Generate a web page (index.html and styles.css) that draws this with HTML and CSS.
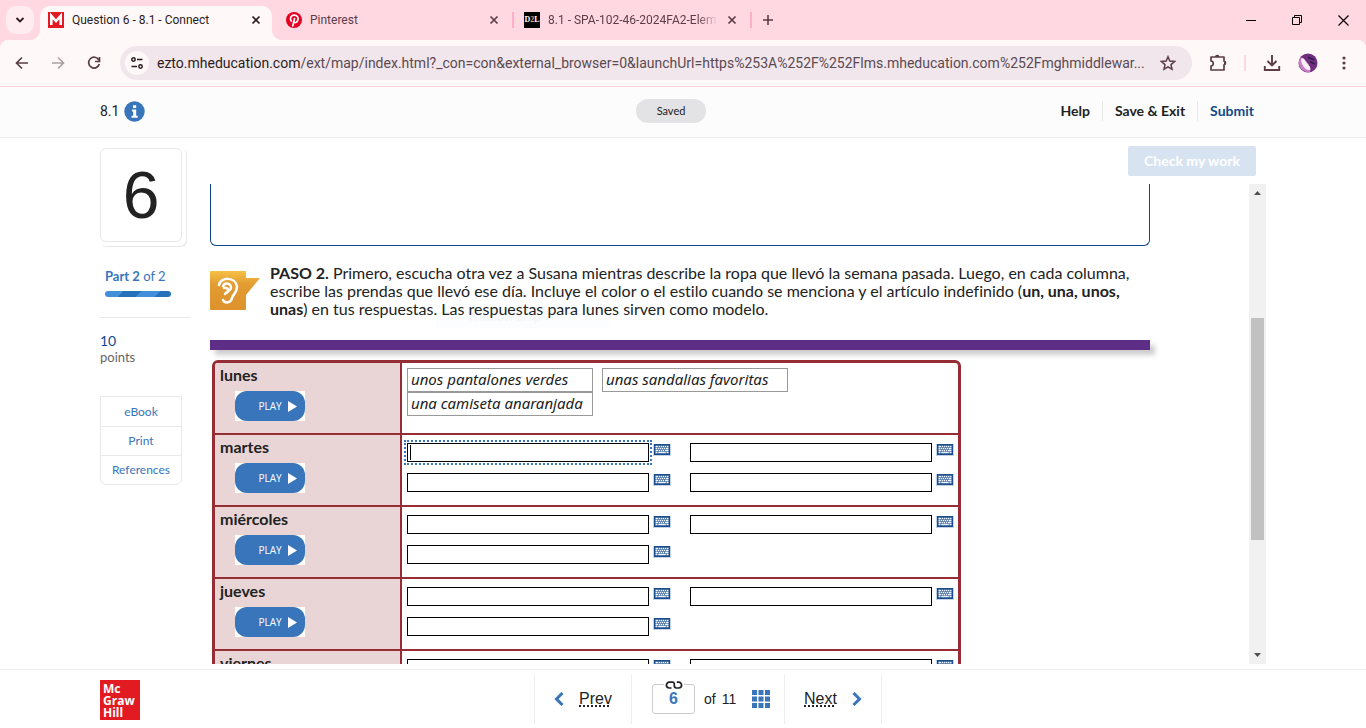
FILE: index.html
```html
<!DOCTYPE html>
<html lang="es">
<head>
<meta charset="utf-8">
<title>Question 6 - 8.1 - Connect</title>
<link rel="stylesheet" href="styles.css">
</head>
<body>
<svg class="defs" width="0" height="0" aria-hidden="true">
  <symbol id="close" viewBox="0 0 12 12"><path d="M2.5 2.5l7 7M9.5 2.5l-7 7" stroke="currentColor" stroke-width="1.7" fill="none"/></symbol>
  <symbol id="keys" viewBox="0 0 18 12"><rect width="18" height="12" fill="#c3d3e6"/><rect x="1" y="0" width="16" height="11" fill="#1d4f8f"/><path d="M2.500 2.500h2.500M5.600 2.500h1.500M7.700 2.500h1.500M9.800 2.500h1.500M11.900 2.500h1.500M14 2.500h1.500M2.500 4.500h1.500M4.600 4.500h1.500M6.700 4.500h1.500M8.800 4.500h1.500M10.900 4.500h1.500M13 4.500h2.500M2.500 6.500h2.500M5.600 6.500h1.500M7.700 6.500h1.500M9.800 6.500h1.500M12 6.500h3.500M2.500 8.500h2M5.200 8.500h7.600M13.500 8.500h2" stroke="#f2f7fd" stroke-width="1.500"/></symbol>
</svg>

<nav class="tabstrip" aria-label="Tabs">
  <button class="tab-search" aria-label="Search tabs"><svg width="12" height="12" viewBox="0 0 12 12"><path d="M2.500 4l3.500 3.500L9.500 4" fill="none" stroke="#2b1c22" stroke-width="1.800"/></svg></button>
  <div class="tab tab-active">
    <svg width="16" height="16" viewBox="0 0 16 16"><rect width="16" height="16" fill="#e21b23"/><path d="M3.300 13V3.800L8 9l4.700-5.200V13" fill="none" stroke="#fff" stroke-width="2.600"/></svg>
    <span class="tab-title">Question 6 - 8.1 - Connect</span>
    <button class="tab-close" aria-label="Close tab"><svg width="12" height="12"><use href="#close"/></svg></button>
  </div>
  <div class="tab">
    <svg width="16" height="16" viewBox="0 0 16 16"><circle cx="8" cy="8" r="8" fill="#e60023"/><path d="M6.800 13.800L8.500 6.700M5.200 9C3.400 6.300 5 3.200 8.300 3.200c3 0 4.400 2.400 3.600 4.900-.8 2.700-3.600 3.100-4.300 1.500" fill="none" stroke="#fff" stroke-width="1.700" stroke-linecap="round"/></svg>
    <span class="tab-title">Pinterest</span>
    <button class="tab-close" aria-label="Close tab"><svg width="12" height="12"><use href="#close"/></svg></button>
  </div>
  <span class="tab-divider"></span>
  <div class="tab">
    <span class="d2l">D<i>2</i>L</span>
    <span class="tab-title tab-title-fade">8.1 - SPA-102-46-2024FA2-Elem</span>
    <button class="tab-close" aria-label="Close tab"><svg width="12" height="12"><use href="#close"/></svg></button>
  </div>
  <span class="tab-divider"></span>
  <button class="tab-new" aria-label="New tab"><svg width="12" height="12" viewBox="0 0 12 12"><path d="M6 1v10M1 6h10" stroke="#5b3d48" stroke-width="1.600"/></svg></button>
  <div class="window-controls">
    <button aria-label="Minimize"><svg width="10" height="10"><path d="M0 5.500h10" stroke="#000"/></svg></button>
    <button aria-label="Restore"><svg width="11" height="11"><path d="M.5 2.500h7v7h-7zM2.500 2.500v-2h7v7h-2" fill="none" stroke="#000"/></svg></button>
    <button aria-label="Close"><svg width="11" height="11"><path d="M.5.5l10 10M10.500.5l-10 10" stroke="#000" stroke-width="1.200"/></svg></button>
  </div>
</nav>

<div class="toolbar-wrap">
<div class="toolbar">
  <button class="tool" aria-label="Back"><svg width="16" height="16" viewBox="0 0 16 16"><path d="M14 8H3M8 2.500L2.500 8 8 13.500" fill="none" stroke="#5b3d48" stroke-width="1.700"/></svg></button>
  <button class="tool" aria-label="Forward"><svg width="16" height="16" viewBox="0 0 16 16"><path d="M2 8h11M8 2.500L13.500 8 8 13.500" fill="none" stroke="#aba0a4" stroke-width="1.700"/></svg></button>
  <button class="tool" aria-label="Reload"><svg width="16" height="16" viewBox="0 0 16 16"><path d="M12.800 5A5.400 5.400 0 1 0 13.300 9M13.500 2v4.500H9" fill="none" stroke="#5b3d48" stroke-width="1.700"/></svg></button>
  <div class="omnibox">
    <button class="site-info" aria-label="Site information"><svg width="14" height="14" viewBox="0 0 14 14" fill="none" stroke="#2b1c22" stroke-width="1.500"><circle cx="3.500" cy="3.500" r="1.700"/><path d="M7 3.500h5.500M1.500 10.500H7"/><circle cx="10.500" cy="10.500" r="1.700"/></svg></button>
    <span class="url"><b>ezto.mheducation.com</b>/ext/map/index.html?_con=con&amp;external_browser=0&amp;launchUrl=https%253A%252F%252Flms.mheducation.com%252Fmghmiddlewar...</span>
    <button class="star" aria-label="Bookmark"><svg width="16" height="16" viewBox="0 0 16 16"><path d="M8 1.800l1.800 4.300 4.700.4-3.500 3.100 1 4.600L8 11.800l-4 2.400 1-4.600-3.500-3.100 4.700-.4z" fill="none" stroke="#5b3d48" stroke-width="1.500"/></svg></button>
  </div>
  <button class="tool tool-ext" aria-label="Extensions"><svg width="18" height="18" viewBox="0 0 18 18"><path d="M2 3h13v4.200c2 .2 2 3.400 0 3.600V16H2v-4c3-.4 3-4.600 0-5z" fill="none" stroke="#5b3d48" stroke-width="1.700" stroke-linejoin="round"/><path d="M6 3a2 2 0 0 1 4.500 0zM15 7a2 2 0 0 1 0 4z" fill="#5b3d48"/></svg></button>
  <span class="tool-divider"></span>
  <button class="tool tool-down" aria-label="Downloads"><svg width="18" height="18" viewBox="0 0 18 18"><path d="M9 1v10M4.500 7L9 11.500 13.500 7M1.800 12v4h14.400v-4" fill="none" stroke="#5b3d48" stroke-width="1.900"/></svg></button>
  <button class="tool" aria-label="Profile"><svg width="20" height="20" viewBox="0 0 20 20"><circle cx="10" cy="10" r="9.500" fill="#6f2f7c"/><path d="M1 8C2 3 5 4 8 8c3 4 6 7 4 11C6 20 0 15 1 8z" fill="#c57fc4"/><path d="M3 6c2-2 3 0 5 3 3 4 5 5 4 8C7 18 3 11 3 6z" fill="#fbeef6"/><path d="M10 4c2 2 4 1 6 3M12 9c2 0 3 2 5 2" stroke="#2e184f" stroke-width="1.400" fill="none"/></svg></button>
  <button class="tool" aria-label="Menu"><svg width="4" height="16" viewBox="0 0 4 16" fill="#5b3d48"><circle cx="2" cy="3" r="1.600"/><circle cx="2" cy="8" r="1.600"/><circle cx="2" cy="13" r="1.600"/></svg></button>
</div>
</div>

<header class="bar">
  <div class="bar-title">8.1 <button class="info" aria-label="Information"><svg width="21" height="21" viewBox="0 0 21 21"><circle cx="10.500" cy="10.500" r="10.200" fill="#3875bb"/><path d="M9 4.200h3.200v2.800H9zM8 8.500h4.200v6.200h1.500v2H7.500v-2h1.700v-4.200H8z" fill="#fff"/></svg></button></div>
  <span class="saved">Saved</span>
  <div class="bar-actions">
    <button>Help</button><button>Save &amp; Exit</button><button class="submit">Submit</button>
  </div>
</header>

<main class="page">
  <aside class="side">
    <div class="stack"><div class="number">6</div></div>
    <div class="part"><b>Part 2</b> of 2</div>
    <div class="progress"></div>
    <div class="points"><span>10</span>points</div>
    <nav class="links"><a href="#">eBook</a><a href="#">Print</a><a href="#">References</a></nav>
  </aside>

  <section class="work">
    <div class="work-top"><button class="check" disabled>Check my work</button></div>
    <div class="pane">
      <div class="content">
        <div class="word-box"></div>
        <div class="step">
          <div class="snip" aria-hidden="true">Window Snip</div>
          <svg class="ear" width="50" height="40" viewBox="0 0 50 40">
            <defs><linearGradient id="gold" x1="0" y1="0" x2="0" y2="1"><stop offset="0" stop-color="#f5c044"/><stop offset=".35" stop-color="#e39b33"/><stop offset="1" stop-color="#dd922b"/></linearGradient></defs>
            <path d="M1 0h35v7h14L36 24v14q0 1-1 1H1q-1 0-1-1V1q0-1 1-1z" fill="url(#gold)"/>
            <path d="M9 14c1-8 17-9 18 2 0 6-4 7-5 11-1 5-7 6-9 2M13 15c2-4 8-3 8 2 0 3-4 3-6 6M14 17c5-1 5 4 2 5" fill="none" stroke="#fff" stroke-width="2.500" stroke-linecap="round"/>
          </svg>
          <p><b>PASO 2.</b> Primero, escucha otra vez a Susana mientras describe la ropa que llevó la semana pasada. Luego, en cada columna,<br>escribe las prendas que llevó ese día. Incluye el color o el estilo cuando se menciona y el artículo indefinido (<b>un, una, unos,</b><br><b>unas</b>) en tus respuestas. Las respuestas para lunes sirven como modelo.</p>
        </div>
        <div class="rule"></div>
        <table class="week">
          <tr>
            <th scope="row">lunes <button class="play"><span>PLAY <svg width="9" height="11"><path d="M0 0l9 5.500L0 11z" fill="#fff"/></svg></span></button></th>
            <td><div class="given"><i>unos pantalones verdes</i><i>unas sandalias favoritas</i><i>una camiseta anaranjada</i></div></td>
          </tr>
          <tr>
            <th scope="row">martes <button class="play"><span>PLAY <svg width="9" height="11"><path d="M0 0l9 5.500L0 11z" fill="#fff"/></svg></span></button></th>
            <td><div class="fields">
              <div class="field focused"><input aria-label="martes 1"><button aria-label="Keyboard"><svg width="18" height="12"><use href="#keys"/></svg></button></div>
              <div class="field"><input aria-label="martes 2"><button aria-label="Keyboard"><svg width="18" height="12"><use href="#keys"/></svg></button></div>
              <div class="field"><input aria-label="martes 3"><button aria-label="Keyboard"><svg width="18" height="12"><use href="#keys"/></svg></button></div>
              <div class="field"><input aria-label="martes 4"><button aria-label="Keyboard"><svg width="18" height="12"><use href="#keys"/></svg></button></div>
            </div></td>
          </tr>
          <tr>
            <th scope="row">miércoles <button class="play"><span>PLAY <svg width="9" height="11"><path d="M0 0l9 5.500L0 11z" fill="#fff"/></svg></span></button></th>
            <td><div class="fields">
              <div class="field"><input aria-label="miércoles 1"><button aria-label="Keyboard"><svg width="18" height="12"><use href="#keys"/></svg></button></div>
              <div class="field"><input aria-label="miércoles 2"><button aria-label="Keyboard"><svg width="18" height="12"><use href="#keys"/></svg></button></div>
              <div class="field"><input aria-label="miércoles 3"><button aria-label="Keyboard"><svg width="18" height="12"><use href="#keys"/></svg></button></div>
            </div></td>
          </tr>
          <tr>
            <th scope="row">jueves <button class="play"><span>PLAY <svg width="9" height="11"><path d="M0 0l9 5.500L0 11z" fill="#fff"/></svg></span></button></th>
            <td><div class="fields">
              <div class="field"><input aria-label="jueves 1"><button aria-label="Keyboard"><svg width="18" height="12"><use href="#keys"/></svg></button></div>
              <div class="field"><input aria-label="jueves 2"><button aria-label="Keyboard"><svg width="18" height="12"><use href="#keys"/></svg></button></div>
              <div class="field"><input aria-label="jueves 3"><button aria-label="Keyboard"><svg width="18" height="12"><use href="#keys"/></svg></button></div>
            </div></td>
          </tr>
          <tr>
            <th scope="row">viernes</th>
            <td><div class="fields">
              <div class="field"><input aria-label="viernes 1"><button aria-label="Keyboard"><svg width="18" height="12"><use href="#keys"/></svg></button></div>
              <div class="field"><input aria-label="viernes 2"><button aria-label="Keyboard"><svg width="18" height="12"><use href="#keys"/></svg></button></div>
            </div></td>
          </tr>
        </table>
      </div>
      <div class="scroll">
        <svg width="7" height="4"><path d="M0 4L3.500 0 7 4z" fill="#505050"/></svg>
        <div class="track"><div class="thumb"></div></div>
        <svg width="7" height="4"><path d="M0 0l3.500 4L7 0z" fill="#505050"/></svg>
      </div>
    </div>
  </section>
</main>

<footer class="foot">
  <div class="logo">Mc<br>Graw<br>Hill</div>
  <nav class="pager" aria-label="Questions">
    <a href="#" class="step-link"><svg width="10" height="14" viewBox="0 0 10 14"><path d="M8.500 1L2.500 7l6 6" fill="none" stroke="#3875bb" stroke-width="3"/></svg><span>Prev</span></a>
    <div class="where">
      <div class="current">
        <svg class="chain" width="20" height="10" viewBox="0 0 20 10"><rect width="20" height="10" fill="#fff"/><path d="M7.500 8H5.300a2.900 2.900 0 0 1 0-5.800H8.500Q10.500 2.200 10.300 5T12.300 8H14.700a2.900 2.900 0 0 0 0-5.800H12.800" fill="none" stroke="#222" stroke-width="1.700"/></svg>
        <input aria-label="Question number" value="6">
      </div>
      <span>of</span><span>11</span>
      <button class="grid-btn" aria-label="Question list"><svg width="18" height="18" viewBox="0 0 18 18" fill="#3875bb"><path d="M0 0h5v5H0zM6.500 0h5v5h-5zM13 0h5v5h-5zM0 6.500h5v5H0zM6.500 6.500h5v5h-5zM13 6.500h5v5h-5zM0 13h5v5H0zM6.500 13h5v5h-5zM13 13h5v5h-5z"/></svg></button>
    </div>
    <a href="#" class="step-link"><span>Next</span><svg width="10" height="14" viewBox="0 0 10 14"><path d="M1.500 1l6 6-6 6" fill="none" stroke="#3875bb" stroke-width="3"/></svg></a>
  </nav>
</footer>
</body>
</html>
```
FILE: styles.css
```css
* { box-sizing: border-box; }
body { margin: 0; height: 100vh; display: flex; flex-direction: column; overflow: hidden; background: #fff; color: #222; font: 16px/18px Lato, sans-serif; font-variant-ligatures: none; }
button { border: 0; padding: 0; background: none; font: inherit; color: inherit; display: flex; align-items: center; justify-content: center; }
svg { flex: none; display: block; }
.defs { position: absolute; }

/* browser tabs */
.tabstrip { flex: none; height: 40px; display: flex; align-items: center; background: #ffd8e2; padding-left: 6px; font: 12px/16px Roboto, sans-serif; color: #5b3d48; }
.tab-search { width: 28px; height: 28px; border-radius: 10px; background: #ffecf0; margin-right: 6px; }
.tab { width: 232px; height: 34px; margin-top: 6px; padding: 0 10px 6px 8px; display: flex; align-items: center; gap: 8px; }
.tab-active { position: relative; background: #fff8f8; border-radius: 10px 10px 0 0; margin-right: 6px; color: #2b1c22; }
.tab-active::before, .tab-active::after { content: ""; position: absolute; bottom: 0; width: 10px; height: 10px; }
.tab-active::before { left: -10px; background: radial-gradient(circle at 0 0, transparent 10px, #fff8f8 10px); }
.tab-active::after { right: -10px; background: radial-gradient(circle at 100% 0, transparent 10px, #fff8f8 10px); }
.tab-title { flex: 1; min-width: 0; overflow: hidden; white-space: nowrap; }
.tab-title-fade { -webkit-mask-image: linear-gradient(90deg, #000 88%, transparent); mask-image: linear-gradient(90deg, #000 88%, transparent); }
.tab-divider { width: 2px; height: 16px; background: #ffaeca; margin: 0 2px; }
.d2l { width: 16px; height: 16px; background: #000; color: #fff; font: bold 8px/16px "Liberation Serif", serif; text-align: center; }
.d2l i { color: #f0a060; font-style: normal; }
.tab-new { width: 28px; height: 28px; }
.window-controls { margin-left: auto; display: flex; }
.window-controls button { width: 46px; height: 40px; }

/* address bar */
.toolbar-wrap { flex: none; background: #ffd8e2; }
.toolbar { height: 47px; border-bottom: 1px solid #f5d5df; border-radius: 8px 8px 0 0; background: #fff8f8; display: flex; align-items: center; padding: 0 4px; }
.tool { width: 36px; height: 36px; }
.omnibox { flex: 1; min-width: 0; height: 34px; margin: 0 8px; border-radius: 17px; background: #f1e6eb; display: flex; align-items: center; padding: 0 16px 0 5px; }
.site-info { flex: none; width: 24px; height: 24px; border-radius: 12px; background: #fff8f8; margin-right: 8px; }
.url { flex: 1; overflow: hidden; white-space: nowrap; font: 14px/20px Roboto, sans-serif; color: #5b4a52; }
.url b { font-weight: normal; color: #2b1c22; }
.tool-divider { width: 2px; height: 16px; background: #ffd8e2; margin: 0 8px; }

/* assignment header */
.bar { flex: none; height: 51px; background: #fcfcfc; border-bottom: 1px solid #eee; padding: 0 100px 2px; display: grid; grid-template-columns: 1fr auto 1fr; align-items: center; }
.bar-title { display: flex; align-items: center; gap: 5px; font: 14px/18px Roboto, sans-serif; }
.saved { width: 70px; height: 24px; margin-right: 24px; border-radius: 12px; background: #e3e2e5; font-size: 11px; line-height: 24px; text-align: center; }
.bar-actions { display: flex; justify-content: flex-end; font-weight: bold; font-size: 14px; }
.bar-actions button { height: 20px; padding: 0 12px; border-left: 1px solid #e8e8e8; }
.bar-actions button:first-child { border-left: 0; }
.bar-actions .submit { color: #114a8a; }

/* question */
.page { flex: 1; min-height: 0; display: flex; gap: 20px; padding: 0 100px 5px; }
.side { flex: none; width: 90px; padding-top: 10px; }
.stack { width: 87px; height: 99px; box-shadow: inset -1px -1px #e8e8e8; border-radius: 6px; }
.number { width: 82px; height: 94px; border: 1px solid #e8e8e8; border-radius: 6px; background: #fff; font: 66px/92px "Liberation Sans", sans-serif; text-align: center; }
.part { margin: 20px 0 6px 5px; font-size: 13px; color: #3875bb; }
.progress { width: 66px; height: 6px; margin-left: 5px; border-radius: 3px; background: repeating-linear-gradient(135deg, #438fd9 0 13px, #2672ba 13px 26px); }
.points { margin-top: 20px; padding-top: 14px; border-top: 1px solid #e8e8e8; font-size: 13px; line-height: 16px; color: #666; }
.points span { display: block; font-size: 14px; line-height: 17px; color: #114a8a; }
.links { width: 82px; margin-top: 31px; border: 1px solid #e8e8e8; border-radius: 0 0 6px 6px; font-size: 12px; text-align: center; }
.links a { display: block; line-height: 28px; color: #3875bb; text-decoration: none; }
.links a:first-child { padding-top: 1px; }
.links a + a { border-top: 1px solid #e8e8e8; }
.work { flex: 1; min-width: 0; display: flex; flex-direction: column; }
.work-top { flex: none; padding: 8px 10px; display: flex; justify-content: flex-end; }
.check { width: 128px; height: 30px; border-radius: 2px; background: #d7e3f1; color: #fff; font-size: 14px; font-weight: bold; }
.pane { flex: 1; min-height: 0; display: flex; overflow: hidden; }
.content { flex: 1; min-width: 0; margin-right: 99px; }
.word-box { height: 62px; border: 1px solid #114a8a; border-top: 0; border-radius: 0 0 6px 6px; }
.step { position: relative; display: flex; gap: 10px; padding-top: 18px; }
.ear { margin-top: 7px; }
.step p { position: relative; margin: 0; white-space: nowrap; }
.snip { position: absolute; left: 226px; top: 60px; width: 173px; padding-left: 32px; background: #fbfdff; font: 12px/22px "Noto Sans", sans-serif; color: #f4f6f9; pointer-events: none; }
.rule { position: relative; height: 10px; margin-top: 22px; background: #5e2d85; box-shadow: 5px 5px 5px rgba(0, 0, 0, .2); }
.week { position: relative; margin: 10px 0 0 2px; border: 3px solid #962d35; border-radius: 6px; border-spacing: 0; background: #fff; overflow: hidden; }
.week th, .week td { padding: 0; vertical-align: top; height: 72px; border-bottom: 2px solid #962d35; }
.week th { width: 187px; padding: 3px 0 0 5px; border-right: 2px solid #962d35; background: #e9d5d5; text-align: left; font-size: 16px; }
.play { width: 70px; height: 30px; margin: 7px 0 0 15px; background: #fff; font: 10px/12px "Open Sans", sans-serif; color: #fff; }
.play span { width: 70px; height: 30px; border-radius: 12px; background: #3875bb; display: flex; align-items: center; justify-content: center; gap: 6px; padding-left: 15px; }
.given { display: flex; flex-wrap: wrap; column-gap: 9px; width: 556px; padding: 5px 170px 0 5px; }
.given i { width: 186px; height: 24px; border: 1px solid #999; padding-left: 3px; font: italic 15px/20px "Noto Sans", sans-serif; white-space: nowrap; }
.fields { width: 556px; padding: 8px 4px 0 5px; display: grid; grid-template-columns: repeat(2, 264px); gap: 11px 19px; }
.field { display: flex; align-items: flex-start; gap: 4px; }
.field input { width: 242px; height: 19px; margin: 0; border: 1px solid #000; padding: 1px 2px; background: #fff; outline: 0; }
.field button { margin-top: 1px; }
.focused input { outline: 2px dotted #3875bb; outline-offset: 1px; background: linear-gradient(#000, #000) 2px 1px / 1px 15px no-repeat #fff; }
.scroll { flex: none; width: 17px; background: #f1f1f1; display: flex; flex-direction: column; align-items: center; padding: 7px 0; }
.track { flex: 1; align-self: stretch; padding: 123px 2px 113px; display: flex; }
.thumb { flex: 1; background: #c1c1c1; }

/* footer */
.foot { flex: none; height: 59px; border-top: 1px solid #eee; padding: 0 100px; display: grid; grid-template-columns: 434px auto 1fr; }
.logo { width: 40px; height: 40px; margin-top: 10px; padding: 3px 0 0 3px; background: #e21b23; color: #fff; font: bold 12px/12px "Open Sans", sans-serif; }
.pager { display: flex; height: 50px; margin-top: 4px; border-left: 1px solid #eee; }
.step-link { display: flex; align-items: center; justify-content: center; gap: 15px; width: 97px; border-right: 1px solid #eee; color: #222; text-decoration: none; font: 16px/18px "Liberation Sans", sans-serif; }
.step-link span { text-decoration: underline dotted 2px; text-underline-offset: 1px; text-decoration-skip-ink: none; }
.where { width: 153px; border-right: 1px solid #eee; padding-left: 20px; display: flex; align-items: center; gap: 6px; font: 14px/18px "Liberation Sans", sans-serif; }
.current { position: relative; margin-right: 3px; }
.current input { display: block; width: 43px; height: 30px; border: 1px solid #ccc; border-radius: 3px; padding: 0; text-align: center; color: #3875bb; font: bold 16px/18px "Liberation Sans", sans-serif; }
.chain { position: absolute; left: 12px; top: -4px; }
.grid-btn { margin-left: 10px; }
```
